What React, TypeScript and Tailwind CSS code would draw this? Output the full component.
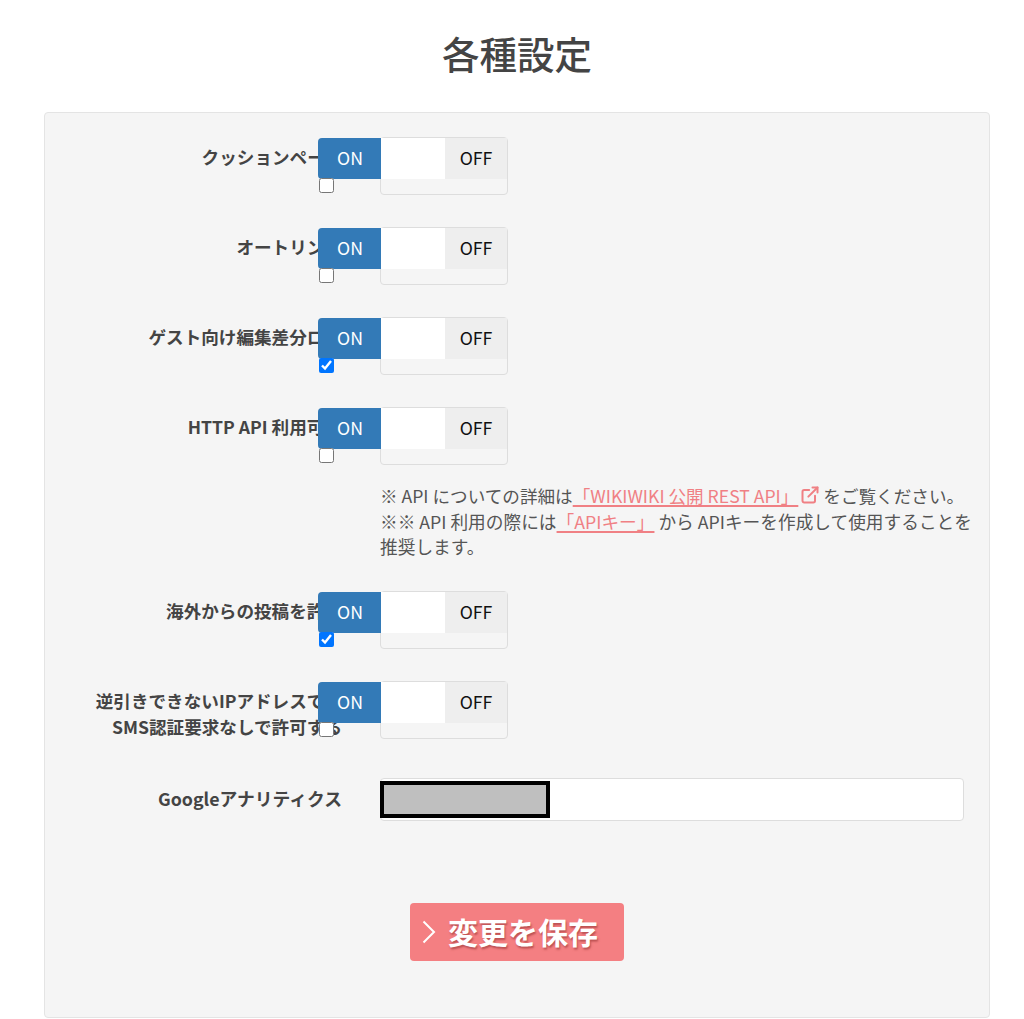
import { ExternalLink } from "lucide-react";

const font = "[font-family:'Noto_Sans_CJK_JP','Liberation_Sans',sans-serif]";

function Toggle({ checked }: { checked?: boolean }) {
  return (
    <div className="relative w-[128px] h-[58px] rounded border border-[#ddd]">
      <div className="flex h-[41px] text-[17.7px] leading-[39px] text-center">
        <div className="w-[64px] bg-white" />
        <div className="flex-1 bg-[#eeeeee] text-[#111]">OFF</div>
      </div>
      {/* broken toggle plugin: the ON half and the raw checkbox hang over the label */}
      <div className="absolute left-[-63px] top-0 w-[63px] h-[41px] rounded-l bg-[#337ab7] text-white text-[17.7px] leading-[39px] text-center pl-[1px]">
        ON
      </div>
      <input
        type="checkbox"
        readOnly
        checked={!!checked}
        className="absolute left-[-62px] top-[40px] w-[15px] h-[15px] m-0"
      />
    </div>
  );
}

function Row({
  label,
  checked,
  className,
}: {
  label: React.ReactNode;
  checked?: boolean;
  className?: string;
}) {
  return (
    <div className={`flex items-start ${className ?? ""}`}>
      <div className="w-[297px] shrink-0 pt-[7px] text-right text-[17.6px] leading-[26px] font-bold text-[#444] mr-[38px]">
        {label}
      </div>
      <Toggle checked={checked} />
    </div>
  );
}

export default function App() {
  return (
    <div className={`h-[1019px] bg-white ${font} text-[#444]`}>
      <h1 className="pt-[25px] pb-[31px] text-center text-[37.5px] leading-[56px] font-medium pl-[10px]">
        各種設定
      </h1>
      <div className="mx-[44px] w-[946px] h-[906px] rounded border border-[#e4e4e4] bg-[#f5f5f5] pt-[24px]">
        <Row label="クッションページ" className="mb-[32px]" />
        <Row label="オートリンク" className="mb-[32px]" />
        <Row label="ゲスト向け編集差分ログ" checked className="mb-[32px]" />
        <Row label="HTTP API 利用可能" />
        <div className="ml-[335px] mt-[18px] mb-[31px] w-[600px] text-[17.7px] leading-[25.5px] text-[#555]">
          <p className="text-[17.6px]">
            ※ API についての詳細は
            <a className="text-[#f08084] underline decoration-[1.5px] underline-offset-2">「WIKIWIKI 公開 REST API」</a>
            <ExternalLink
              className="inline-block w-[20px] h-[20px] ml-[2px] mr-[3px] -mt-[6px] text-[#f08084]"
              strokeWidth={2.4}
            />
            をご覧ください。
          </p>
          <p>
            ※※ API 利用の際には
            <a className="text-[#f08084] underline decoration-[1.5px] underline-offset-2">「APIキー」</a>
            {" "}から APIキーを作成して使用することを推奨します。
          </p>
        </div>
        <Row label="海外からの投稿を許可" checked className="mb-[32px]" />
        <Row
          label={
            <>
              逆引きできないIPアドレスでも
              <br />
              SMS認証要求なしで許可する
            </>
          }
        />
        <div className="flex items-center mt-[38px]">
          <div className="w-[335px] shrink-0 pr-[38px] pb-[2px] text-right text-[17.8px] font-bold text-[#444]">
            Googleアナリティクス
          </div>
          <div className="w-[584px] h-[43px] rounded border border-[#ddd] bg-white flex items-center">
            <div className="w-[170px] h-[37px] -ml-[1px] border-[4px] border-black bg-[#bfbfbf]" />
          </div>
        </div>
        <div className="mt-[82px] ml-[365px] flex h-[58px] w-[214px] items-center rounded bg-[#f47f82] pl-[12px] text-white">
          <svg width="14" height="24" viewBox="0 0 14 24" fill="none" stroke="currentColor" strokeWidth="2" className="shrink-0">
            <path d="M1.5 1.5 L12 12 L1.5 22.5" />
          </svg>
          <span className="ml-[12px] text-[30px] font-bold [text-shadow:1px_2px_2px_rgba(150,50,50,0.6)]">
            変更を保存
          </span>
        </div>
      </div>
    </div>
  );
}
